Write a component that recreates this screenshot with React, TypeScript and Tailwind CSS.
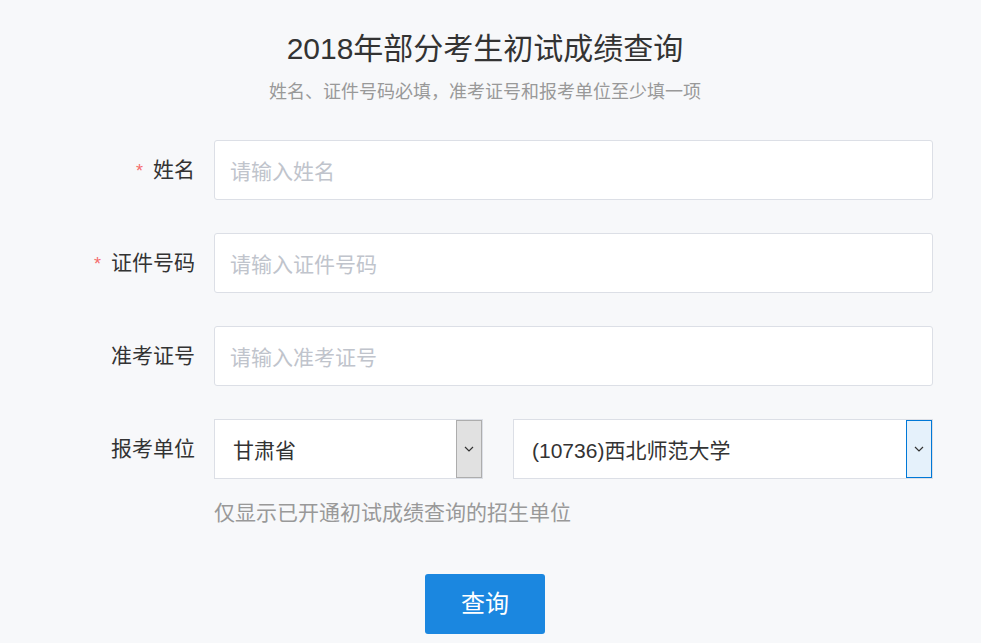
import React from 'react';

const font = { fontFamily: '"Liberation Sans", "Noto Sans CJK SC", sans-serif' };

function Row({ label, required, children }: { label: string; required?: boolean; children: React.ReactNode }) {
  return (
    <div className="flex items-center gap-[19px]">
      <div className="w-[120px] text-right text-[21px] text-[#333]">
        {required && <span className="text-[#f56c6c] mr-[10px] text-[18px]">*</span>}
        {label}
      </div>
      <div className="flex-1">{children}</div>
    </div>
  );
}

function TextInput({ placeholder }: { placeholder: string }) {
  return (
    <input
      placeholder={placeholder}
      className="w-full h-[60px] bg-white border border-[#dcdfe6] rounded-[3px] px-[15px] pt-[3px] text-[21px] text-[#333] placeholder:text-[#c0c4cc] outline-none"
      style={font}
    />
  );
}

function Chevron() {
  return (
    <svg width="10" height="6" viewBox="0 0 10 6" fill="none" stroke="#333" strokeWidth="1.2">
      <path d="M1 1l4 4 4-4" />
    </svg>
  );
}

export default function App() {
  return (
    <div className="w-screen min-h-screen bg-[#f7f8fa]" style={font}>
      <div className="w-[970px]">
        <h1 className="text-center text-[30px] text-[#333] pt-[29px] leading-[40px]">2018年部分考生初试成绩查询</h1>
        <p className="text-center text-[18px] text-[#999] mt-[11px] leading-[24px]">
          姓名、证件号码必填，准考证号和报考单位至少填一项
        </p>

        <div className="pl-[75px] pr-[37px] mt-[36px] flex flex-col gap-[33px]">
          <Row label="姓名" required>
            <TextInput placeholder="请输入姓名" />
          </Row>
          <Row label="证件号码" required>
            <TextInput placeholder="请输入证件号码" />
          </Row>
          <Row label="准考证号">
            <TextInput placeholder="请输入准考证号" />
          </Row>
          <div>
            <Row label="报考单位">
              <div className="flex gap-[30px]">
                <div className="w-[269px] h-[60px] flex bg-white border border-[#dcdfe6]">
                  <div className="flex-1 flex items-center pl-[18px] pt-[3px] text-[21px] text-[#333]">甘肃省</div>
                  <div className="w-[26px] flex items-center justify-center bg-[#e1e1e1] border border-[#adadad]">
                    <Chevron />
                  </div>
                </div>
                <div className="flex-1 h-[60px] flex bg-white border border-[#dcdfe6]">
                  <div className="flex-1 flex items-center pl-[18px] pt-[3px] text-[21px] text-[#333]">(10736)西北师范大学</div>
                  <div className="w-[26px] flex items-center justify-center bg-[#e5f1fb] border border-[#0078d7]">
                    <Chevron />
                  </div>
                </div>
              </div>
            </Row>
            <p className="ml-[139px] mt-[19px] text-[21px] text-[#999] leading-[30px]">仅显示已开通初试成绩查询的招生单位</p>
          </div>
        </div>

        <div className="flex justify-center mt-[46px]">
          <button className="w-[120px] h-[60px] rounded-[3px] bg-[#1b87e0] text-white text-[24px]" style={font}>
            查询
          </button>
        </div>
      </div>
    </div>
  );
}
